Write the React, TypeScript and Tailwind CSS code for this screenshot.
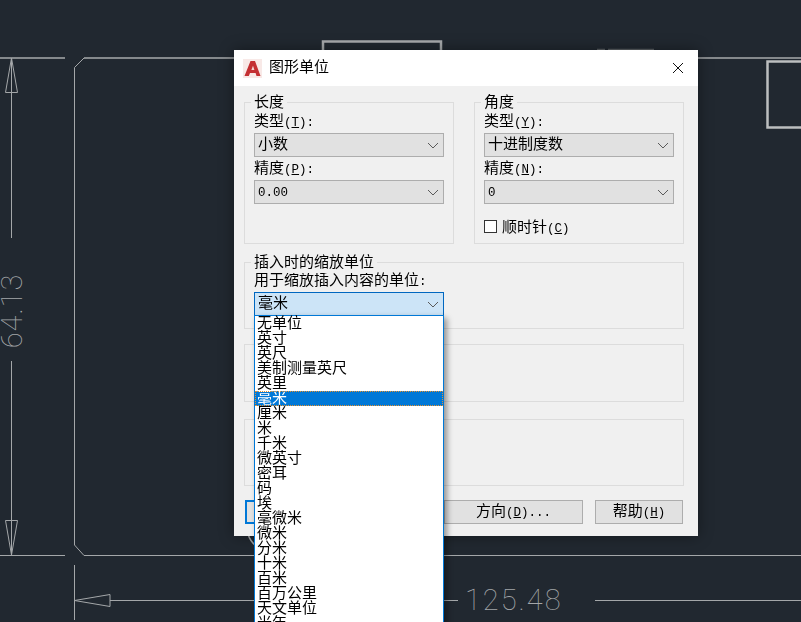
const cjk = "font-['Liberation_Mono','Noto_Sans_CJK_SC',monospace]";

const units = [
  "无单位", "英寸", "英尺", "美制测量英尺", "英里", "毫米", "厘米", "米", "千米", "微英寸", "密耳",
  "码", "埃", "毫微米", "微米", "分米", "十米", "百米", "百万公里", "天文单位", "光年",
];

const Hot = ({ k }: { k: string }) => (
  <span className="text-[12.5px]">
    (<span className="underline">{k}</span>)
  </span>
);

const Label = ({ text, k, first }: { text: string; k: string; first?: boolean }) => (
  <div className={`text-[15px] leading-[20px] ${first ? "h-[20px]" : "h-[23px] pt-[3px]"}`}>
    {text}
    <Hot k={k} />
    <span className="text-[12.5px]">:</span>
  </div>
);

const Chevron = () => (
  <svg width="12" height="7" viewBox="0 0 12 7" className="shrink-0">
    <polyline points="1,1 6,6 11,1" fill="none" stroke="#5a5a5a" strokeWidth="1" />
  </svg>
);

const Select = ({ value, focus, mono }: { value: string; focus?: boolean; mono?: boolean }) => (
  <div
    className={`flex h-[24px] w-[190px] items-center justify-between border pl-[3px] pr-[4px] ${
      focus ? "border-[#0067c0] bg-[#cce4f7]" : "border-[#adadad] bg-[#e1e1e1]"
    }`}
  >
    <span className={`pt-[2px] ${mono ? "text-[12.5px]" : "text-[15px]"}`}>{value}</span>
    <Chevron />
  </div>
);

const Group = ({ title, className, children }: { title?: string; className: string; children?: React.ReactNode }) => (
  <div className={`relative border border-[#dcdcdc] pl-[9px] ${className}`}>
    {title && (
      <span className="absolute left-[6px] top-[-8px] bg-[#f0f0f0] px-[3px] text-[15px] leading-[18px]">{title}</span>
    )}
    {children}
  </div>
);

const Button = ({ children, className }: { children: React.ReactNode; className: string }) => (
  <div className={`flex h-[24px] items-center justify-center border pt-[3px] text-[15px] ${className}`}>{children}</div>
);

const Drawing = () => (
  <svg width="801" height="622" viewBox="0 0 801 622" className="absolute left-0 top-0" fill="none" stroke="#a4a7a9" strokeWidth="1">
    <path d="M0 58H65M84 58H801" stroke="#85898c" strokeWidth="2" />
    <path d="M84 58L74.5 67.5V545L84 555.5" />
    <path d="M0 555.5H65M84 555.5H801" />
    <path d="M74.5 565V620" />
    <path d="M11.5 58V238M11.5 361V555" />
    <path d="M11.5 58L5.5 92.5H17.5ZM11.5 555L5.5 520.5H17.5Z" />
    <path d="M74.5 600.5L110 594.5V606.5Z" />
    <path d="M110 600.5H458M595 600.5H801" />
    <path d="M323 52V41.5H441V52" stroke="#a8abad" strokeWidth="2.5" />
    <path d="M801 61.5H767.5V127.5H801" stroke="#bcbebf" strokeWidth="2.5" />
    <path d="M597 49.5H605M608 49.5H654" stroke="#5a5f63" strokeWidth="1.5" />
    <path d="M248 534Q250 541 256 546" strokeWidth="1.5" />
  </svg>
);

const Logo = () => (
  <svg width="19" height="19" viewBox="0 0 19 19" className="shrink-0">
    <rect width="19" height="19" fill="#f8e9e7" />
    <path d="M1.5 17L7.5 2H12L17.5 17H13.5L12.6 14H7L5.8 17Z" fill="#c43033" />
    <path d="M8.4 11H11.4L10 6.8Z" fill="#f4d6d3" />
  </svg>
);

export default function App() {
  return (
    <div className={`relative h-[622px] w-[801px] overflow-hidden bg-[#212830] text-black ${cjk}`}>
      <Drawing />
      <span className="absolute left-[-28px] top-[296px] w-[80px] -rotate-90 text-center font-['Roboto',sans-serif] text-[29px] font-thin leading-[30px] tracking-[1px] text-[#a4a7a9]">
        64.13
      </span>
      <span className="absolute left-[465px] top-[585px] font-['Roboto',sans-serif] text-[29px] font-thin leading-[30px] tracking-[2px] text-[#a4a7a9]">
        125.48
      </span>

      {/* dialog */}
      <div className="absolute left-[234px] top-[50px] h-[486px] w-[464px] bg-[#f0f0f0] shadow-[0_0_14px_rgba(0,0,0,0.4)] [will-change:transform]">
        <div className="flex h-[36px] items-center bg-white pl-[9px] pr-[14px]">
          <Logo />
          <span className="ml-[7px] flex-1 pt-[3px] text-[15px]">图形单位</span>
          <svg width="12" height="12" viewBox="0 0 12 12">
            <path d="M1 1L11 11M11 1L1 11" stroke="#111" strokeWidth="1" fill="none" />
          </svg>
        </div>

        <div className="px-[10px] pt-[16px]">
          <div className="flex gap-[20px]">
            <Group title="长度" className="h-[142px] w-[210px] pt-[10px]">
              <Label first text="类型" k="T" />
              <Select value="小数" />
              <Label text="精度" k="P" />
              <Select value="0.00" mono />
            </Group>
            <Group title="角度" className="h-[142px] w-[210px] pt-[10px]">
              <Label first text="类型" k="Y" />
              <Select value="十进制度数" />
              <Label text="精度" k="N" />
              <Select value="0" mono />
              <div className="mt-[13px] flex items-start gap-[5px] text-[15px] leading-[20px]">
                <span className="mt-[3px] h-[13px] w-[13px] border border-[#333] bg-white" />
                <span className="pt-[2px]">
                  顺时针
                  <Hot k="C" />
                </span>
              </div>
            </Group>
          </div>

          <Group title="插入时的缩放单位" className="mt-[18px] h-[67px] w-[440px] pt-[9px]">
            <div className="h-[20px] text-[15px] leading-[20px]">
              用于缩放插入内容的单位<span className="text-[12.5px]">:</span>
            </div>
            <Select value="毫米" focus />
          </Group>
          <Group className="mt-[15px] h-[58px] w-[440px]" />
          <Group className="mt-[17px] h-[67px] w-[440px]" />

          <div className="mt-[14px] flex w-[440px] pl-[1px]">
            <Button className="w-[88px] border-2 border-[#0078d7] bg-[#e1e1e1]">确定</Button>
            <Button className="ml-[12px] w-[88px] border-[#adadad] bg-[#e1e1e1]">取消</Button>
            <Button className="ml-[11px] w-[139px] border-[#adadad] bg-[#e1e1e1]">
              方向
              <Hot k="D" />
              <span className="text-[12.5px]">...</span>
            </Button>
            <Button className="ml-[12px] w-[88px] border-[#adadad] bg-[#e1e1e1]">
              帮助
              <Hot k="H" />
            </Button>
          </div>
        </div>
      </div>

      {/* open dropdown list */}
      <div className="absolute left-[254px] top-[315px] w-[190px] border border-[#0078d7] bg-white shadow-[3px_3px_6px_rgba(0,0,0,0.4)] [will-change:transform]">
        {units.map((u) => (
          <div
            key={u}
            className={`h-[15px] pl-[2px] pt-[1px] text-[15px] leading-[15px] ${
              u === "毫米" ? "bg-[#0078d7] text-white outline-1 outline-dotted outline-offset-[-1px] outline-[#e8912c]" : ""
            }`}
          >
            {u}
          </div>
        ))}
      </div>
    </div>
  );
}
